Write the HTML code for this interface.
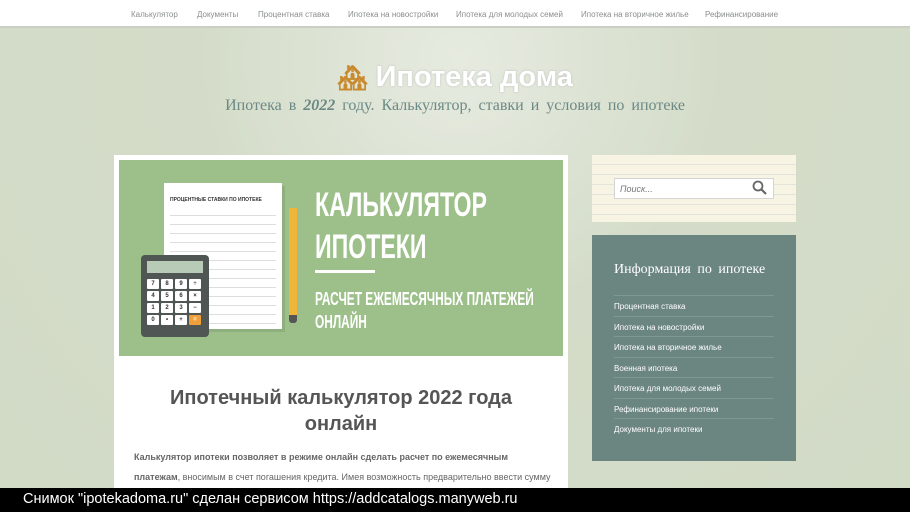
<!DOCTYPE html>
<html><head><meta charset="utf-8"><style>
*{margin:0;padding:0;box-sizing:border-box}
body{width:910px;height:512px;overflow:hidden;font-family:"Liberation Sans",sans-serif;background:radial-gradient(ellipse at 460px 60px,#e6ebe0 0,#d4dcc9 260px,#d2dbc6 100%);position:relative}
.top{position:absolute;left:0;top:0;width:910px;height:28px;background:#fff;border-bottom:2px solid #c9cfc5;font-size:8px;color:#8a8f8a}
.top span{position:absolute;top:10px}
.logo{position:absolute;top:61px;left:0;width:910px;text-align:center;color:#fff;font-weight:bold;font-size:29px;text-shadow:0 0 2px #bbb}
.sub{position:absolute;top:97px;left:0;width:910px;text-align:center;font-family:"Liberation Serif",serif;font-size:16px;color:#6c8985;word-spacing:3px}
.card{position:absolute;left:114px;top:155px;width:454px;height:340px;background:#fff}
.banner{position:absolute;left:5px;top:5px;width:444px;height:196px;background:#9dc08b;overflow:hidden}
.bt{position:absolute;color:#fff;font-family:"Liberation Sans Narrow","Liberation Sans",sans-serif;font-weight:bold;transform:scaleX(.68);transform-origin:left;white-space:nowrap}
h1{position:absolute;left:0;top:230px;width:454px;text-align:center;font-size:20px;color:#555;line-height:26px}
.p{position:absolute;left:20px;top:292px;width:420px;font-size:9px;color:#666;line-height:20px}
.search{position:absolute;left:592px;top:155px;width:204px;height:67px;background:repeating-linear-gradient(#f8f4e3 0,#f8f4e3 9px,#e2e3da 9px,#e2e3da 10px)}
.inp{position:absolute;left:22px;top:23px;width:160px;height:21px;background:#fff;border:1px solid #d5d5d5;font-size:9px;font-style:italic;color:#777;padding:5px 5px}
.info{position:absolute;left:592px;top:235px;width:204px;height:226px;background:#6b8580}
.info h3{position:absolute;left:22px;top:27px;font-family:"Liberation Serif",serif;font-weight:normal;color:#fff;font-size:14px;word-spacing:3px}
.info ul{position:absolute;left:22px;top:60px;width:160px;list-style:none}
.info li{border-top:1px solid #7f9893;height:20.5px;font-size:8px;color:#fff;padding-top:6px}
.foot{position:absolute;left:0;top:488px;width:910px;height:24px;background:#000;color:#fff;font-size:14.5px;padding:3px 0 0 23px}
.keys{position:absolute;left:6px;top:24px;width:56px;display:grid;grid-template-columns:repeat(4,12px);gap:2px}
.keys b{height:10px;background:#fff;border-radius:1px;font-size:6px;color:#333;text-align:center;line-height:10px}
</style></head><body>
<div class="top">
<span style="left:131px">Калькулятор</span><span style="left:197px">Документы</span><span style="left:258px">Процентная ставка</span><span style="left:348px">Ипотека на новостройки</span><span style="left:456px">Ипотека для молодых семей</span><span style="left:581px">Ипотека на вторичное жилье</span><span style="left:705px">Рефинансирование</span>
</div>
<div class="logo"><span style="font-size:24px;text-shadow:none;color:#c98a2e">🏘</span> Ипотека дома</div>
<div class="sub">Ипотека в <i style="font-weight:bold">2022</i> году. Калькулятор, ставки и условия по ипотеке</div>
<div class="card">
<div class="banner">
<div style="position:absolute;left:45px;top:23px;width:118px;height:146px;background:#fff;box-shadow:3px 3px 0 #8fb07e">
<div style="font-size:5px;font-weight:bold;color:#333;margin:14px 0 0 6px">ПРОЦЕНТНЫЕ СТАВКИ ПО ИПОТЕКЕ</div>
<div style="margin:4px 6px;height:120px;background:repeating-linear-gradient(#fff 0,#fff 8px,#ddd 8px,#ddd 9px)"></div></div>
<div style="position:absolute;left:170px;top:48px;width:8px;height:115px;background:#f0b63a;border-radius:0 0 3px 3px;border-bottom:8px solid #555"></div>
<div style="position:absolute;left:22px;top:95px;width:68px;height:82px;background:#505653;border-radius:4px"><div style="margin:6px;height:12px;background:#b8cbb6"></div>
<div class="keys"><b>7</b><b>8</b><b>9</b><b>÷</b><b>4</b><b>5</b><b>6</b><b>×</b><b>1</b><b>2</b><b>3</b><b>−</b><b>0</b><b>•</b><b>+</b><b style="background:#f0a03a;color:#fff">=</b></div></div>
<div class="bt" style="left:196px;top:26px;font-size:34px">КАЛЬКУЛЯТОР</div>
<div class="bt" style="left:196px;top:68px;font-size:34px">ИПОТЕКИ</div>
<div style="position:absolute;left:196px;top:110px;width:60px;height:3px;background:#fff"></div>
<div class="bt" style="left:196px;top:128px;font-size:18px;line-height:23px;transform:scaleX(.66)">РАСЧЕТ ЕЖЕМЕСЯЧНЫХ ПЛАТЕЖЕЙ<br>ОНЛАЙН</div>
</div>
<h1>Ипотечный калькулятор 2022 года<br>онлайн</h1>
<div class="p"><b>Калькулятор ипотеки позволяет в режиме онлайн сделать расчет по ежемесячным платежам</b>, вносимым в счет погашения кредита. Имея возможность предварительно ввести сумму</div>
</div>
<div class="search"><div class="inp">Поиск...</div>
<svg style="position:absolute;left:160px;top:25px" width="16" height="16"><circle cx="6" cy="6" r="4.5" fill="none" stroke="#666" stroke-width="1.8"/><path d="M9.5 9.5L14 14" stroke="#666" stroke-width="2.2"/></svg></div>
<div class="info"><h3>Информация по ипотеке</h3><ul>
<li>Процентная ставка</li><li>Ипотека на новостройки</li><li>Ипотека на вторичное жилье</li><li>Военная ипотека</li><li>Ипотека для молодых семей</li><li>Рефинансирование ипотеки</li><li>Документы для ипотеки</li></ul></div>
<div class="foot">Снимок "ipotekadoma.ru" сделан сервисом https://addcatalogs.manyweb.ru</div>
</body></html>
